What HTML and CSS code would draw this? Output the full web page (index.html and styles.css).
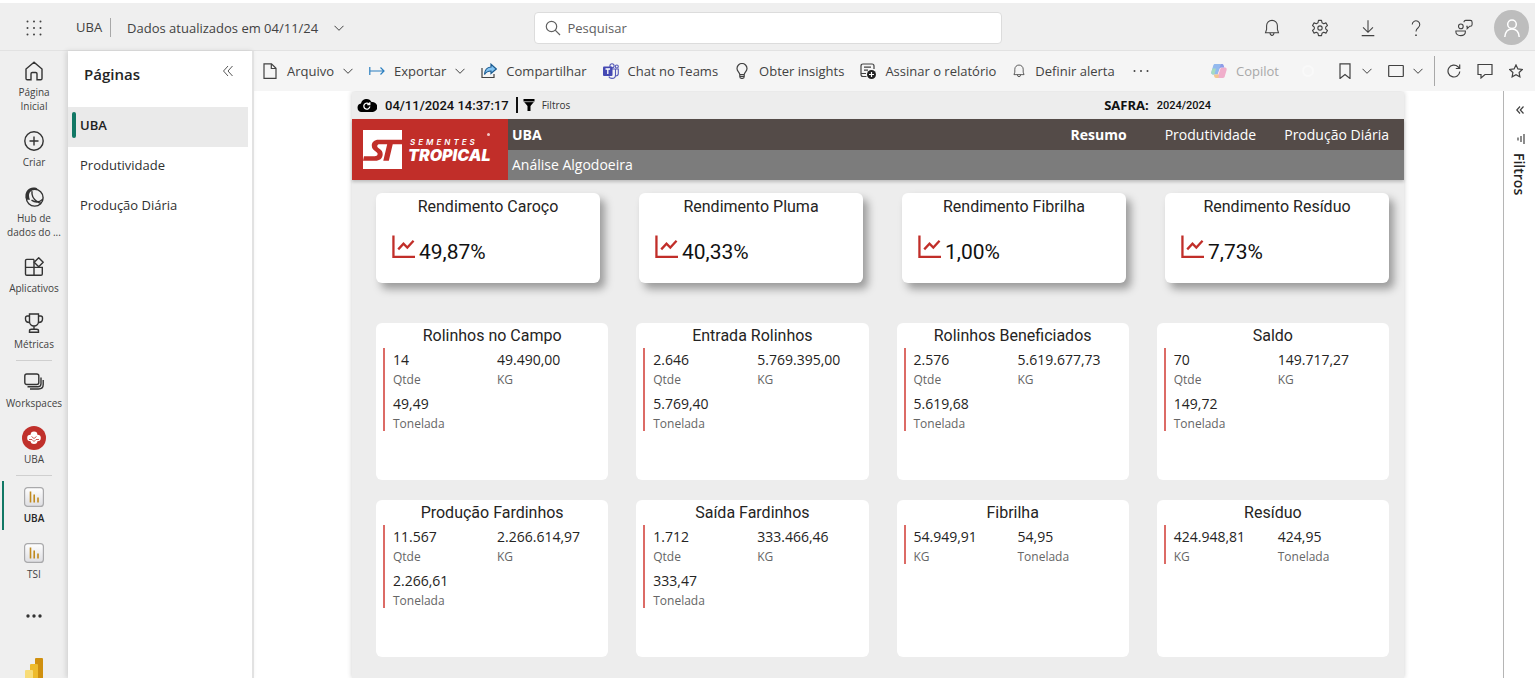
FILE: index.html
```html
<!DOCTYPE html>
<html lang="pt-BR">
<head>
<meta charset="utf-8">
<meta name="viewport" content="width=device-width, initial-scale=1">
<title>UBA - Power BI</title>
<link rel="stylesheet" href="styles.css">
</head>
<body>
<svg class="defs" aria-hidden="true">
  <symbol id="chev" viewBox="0 0 10 10"><path d="M.5 2.8 5 7.3l4.500-4.500"/></symbol>
  <symbol id="bell" viewBox="0 0 20 20"><path d="M10 1.500a6 6 0 0 0-6 6v4.200L2.800 15.200h14.400L16 11.700V7.500a6 6 0 0 0-6-6zM7.800 15.400a2.200 2.800 0 0 0 4.400 0"/></symbol>
  <symbol id="trend" viewBox="0 0 24 24"><path d="M1.500 0v22.200H24M6.500 14.500l5.500-6 4 4L22.500 5.500" stroke-width="2.400"/></symbol>
  <symbol id="report" viewBox="0 0 20 20"><rect x=".6" y=".6" width="18.800" height="18.800" rx="3" fill="url(#rg)" stroke="#a9a9ab" stroke-width="1.200"/><path d="M6.500 4.500v11M10.200 7.500v8M14 10.500v5" stroke="#c08a1e" stroke-width="1.600"/></symbol>
  <linearGradient id="rg" x1="0" y1="0" x2="0" y2="1"><stop offset="0" stop-color="#fff"/><stop offset="1" stop-color="#dedee2"/></linearGradient>
</svg>

<header class="top">
  <div class="top-left">
    <button class="waffle" aria-label="Iniciador de aplicativos"><svg class="dots9" viewBox="0 0 16 16"><path d="M1.500 1.500h0M8 1.500h0M14.500 1.500h0M1.500 8h0M8 8h0M14.500 8h0M1.500 14.500h0M8 14.500h0M14.500 14.500h0"/></svg></button>
    <span class="crumb">UBA</span>
    <button class="updated">Dados atualizados em 04/11/24 <svg class="chev"><use href="#chev"/></svg></button>
  </div>
  <label class="search">
    <svg class="i16" viewBox="0 0 16 16"><circle cx="6.500" cy="6.500" r="5.200"/><path d="M10.200 10.200 15 15"/></svg>
    <input type="search" placeholder="Pesquisar" aria-label="Pesquisar">
  </label>
  <div class="top-right">
    <button aria-label="Notificações"><svg class="i18"><use href="#bell"/></svg></button>
    <button aria-label="Configurações"><svg class="i18" viewBox="0 0 20 20"><circle cx="10" cy="10" r="2.400"/><path d="M8.300 1.500h3.400l.5 2.600 1.900 1.100 2.500-.9 1.700 2.900-2 1.800v2l2 1.800-1.700 2.900-2.500-.9-1.900 1.100-.5 2.600H8.300l-.5-2.600-1.900-1.100-2.500.9-1.700-2.900 2-1.800V9l-2-1.800 1.700-2.900 2.500.9 1.900-1.100z" stroke-linejoin="round"/></svg></button>
    <button aria-label="Baixar"><svg class="i18" viewBox="0 0 20 20"><path d="M10 1.500v13M4.500 9.300l5.500 5.500 5.500-5.500M3 18.500h14"/></svg></button>
    <button aria-label="Ajuda"><svg class="i18" viewBox="0 0 20 20"><path d="M5.800 6.200a4.200 4.200 0 1 1 6.600 3.500C10.800 10.900 10 11.700 10 14"/><path d="M10 17.200v1.600" stroke-width="1.800"/></svg></button>
    <button aria-label="Comentários"><svg class="i18" viewBox="0 0 20 20"><circle cx="6.500" cy="8.200" r="2.600"/><path d="M1 13.300h10.500v1.200c0 2.400-2.300 4-5.200 4S1 16.900 1 14.500zM10 3.500c0-1.400.6-2 2-2h5c1.400 0 2 .6 2 2V6c0 1.400-.6 2-2 2h-.6l-2.900 2.800V8h-1"/></svg></button>
    <button class="avatar" aria-label="Conta"><svg class="i20" viewBox="0 0 20 20"><circle cx="10" cy="6.300" r="4.300"/><path d="M2.800 19c.4-5 3-8 7.200-8s6.800 3 7.200 8"/></svg></button>
  </div>
</header>

<div class="shell">
  <nav class="rail">
    <a href="#"><svg class="i20" viewBox="0 0 20 20"><path d="M10 1.200 2 8v9.500c0 .8.500 1.300 1.300 1.300H7v-6c0-.8.500-1.300 1.300-1.300h3.400c.8 0 1.300.5 1.300 1.300v6h3.700c.8 0 1.300-.5 1.300-1.300V8z"/></svg><span>Página<br>Inicial</span></a>
    <a href="#"><svg class="i20" viewBox="0 0 20 20"><circle cx="10" cy="10" r="9.200"/><path d="M10 5.500v9M5.500 10h9"/></svg><span>Criar</span></a>
    <a href="#"><svg class="i20" viewBox="0 0 20 20"><circle cx="10.700" cy="10.700" r="8.400"/><path d="M1.700 11C.2 5 5-.8 11 .6c1.200.2 2.200.8 3 1.800-4.500-.8-8.500 1.400-9 5.600-.1 1.700.3 3.200 1 4.700C4 13 2.200 12.700 1.700 11z" fill="#333" stroke="none"/><path d="M7.500 13.200c3.500 2.400 8 2.100 11.300-.9M8 4.200c-.5 4 1.500 8 5 10.300M13 14.500l4 2"/></svg><span>Hub de<br>dados do ...</span></a>
    <a href="#"><svg class="i20" viewBox="0 0 20 20"><path d="M10 2.400H2.800c-.8 0-1.300.5-1.300 1.300V17c0 .8.500 1.300 1.300 1.300H17c.8 0 1.300-.5 1.300-1.300v-6.600H1.500M10 2.400v15.900"/><path d="m14.700.8 4.500 4.500-4.500 4.500-4.500-4.500z" fill="#efefef" stroke-linejoin="round"/></svg><span>Aplicativos</span></a>
    <a href="#"><svg class="i20" viewBox="0 0 20 20"><path d="M5.500 1h9v7.500a4.500 4.500 0 0 1-9 0zM5.500 3H3.300C2.300 3 1.500 3.500 1.500 5v1c0 2 1.500 3.500 4 3.500M14.500 3h2.200c1 0 1.800.5 1.800 2v1c0 2-1.500 3.500-4 3.500M10 13v3.200M7.500 16.200h5c1 0 2 .8 2 1.600v1.400h-9v-1.400c0-.8 1-1.600 2-1.600z"/></svg><span>Métricas</span></a>
    <hr>
    <a href="#"><svg class="i20" viewBox="0 0 20 20"><rect x=".8" y="2" width="14" height="10.500" rx="2"/><path d="M3.500 14.800H14c2 0 3-1 3-3V5.500M6 17h8.500c3 0 4.700-1.700 4.700-4.500V8"/></svg><span>Workspaces</span></a>
    <a href="#"><svg class="badge" viewBox="0 0 24 24"><circle cx="12" cy="12" r="12" fill="#c0302b" stroke="none"/><g fill="#fff" stroke="none"><circle cx="12" cy="9" r="3.400"/><circle cx="8.500" cy="12" r="3.300"/><circle cx="15.500" cy="12" r="3.300"/><circle cx="12" cy="14.500" r="3.500"/></g><path class="cotton" d="M7 13.500h3l2 2 2-2h3M9.500 10.500l2.500 2 2.500-2"/></svg><span>UBA</span></a>
    <hr>
    <a href="#" class="current" aria-current="page"><svg class="i20"><use href="#report"/></svg><span>UBA</span></a>
    <a href="#"><svg class="i20"><use href="#report"/></svg><span>TSI</span></a>
    <button class="more" aria-label="Mais"><svg class="i20" viewBox="0 0 20 20"><path class="thick" d="M4 10h0M10 10h0M16 10h0"/></svg></button>
    <a href="#" class="pbi" aria-label="Power BI"><svg class="i24" viewBox="0 0 24 24"><rect x="13" y="0" width="8" height="24" rx="1" fill="#d0900f" stroke="none"/><rect x="8" y="6" width="8" height="18" rx="1" fill="#eebb2c" stroke="none"/><rect x="3" y="12" width="8" height="12" rx="1" fill="#f8dc78" stroke="none"/></svg></a>
  </nav>

  <aside class="pages">
    <div class="pages-head"><h2>Páginas</h2><button aria-label="Recolher"><svg class="i12" viewBox="0 0 12 12"><path d="M6 1 1.500 6 6 11M10.500 1 6 6l4.500 5"/></svg></button></div>
    <a href="#" class="page sel">UBA</a>
    <a href="#" class="page">Produtividade</a>
    <a href="#" class="page">Produção Diária</a>
  </aside>

  <main class="work">
    <div class="tools">
      <button><svg class="i16" viewBox="0 0 16 16"><path d="M2 .8h7.500l4.500 4.500v10H2zM9.300 1v4.500h4.500"/></svg>Arquivo<svg class="chev"><use href="#chev"/></svg></button>
      <button><svg class="i16 blue" viewBox="0 0 16 16"><path d="M.8 4v8M1 8h14M11.500 4.500 15 8l-3.500 3.500"/></svg>Exportar<svg class="chev"><use href="#chev"/></svg></button>
      <button><svg class="i16" viewBox="0 0 16 16"><path d="M1 5v9.500h12V11"/><path d="M10 1.200 15.300 6 10 10.500V8C7 8 5 9 3.500 11.500 3.800 7 6 4.200 10 4z" fill="#83c4f2" stroke="#1c5c92"/></svg>Compartilhar</button>
      <button><svg class="i16" viewBox="0 0 16 16"><g stroke="#5459b8" stroke-width="1.100"><circle cx="9" cy="2.800" r="2.100"/><circle cx="13.800" cy="3.500" r="1.500"/><path d="M9 6h3.500v6c0 2-1.500 3.400-3.500 3.400-1.500 0-2.500-.6-3.200-1.800M12.500 6h2.800v4.500c0 1.500-1 2.500-2.800 2.500"/></g><rect y="3.500" width="9.500" height="9.500" rx="1" fill="#4549b3" stroke="none"/><path d="M2.500 6h4.600M4.800 6v5" stroke="#fff" stroke-width="1.300"/></svg>Chat no Teams</button>
      <button><svg class="i16" viewBox="0 0 16 16"><path d="M5.800 11.500C5.600 9.500 3 8.500 3 5.500a5 5 0 0 1 10 0c0 3-2.600 4-2.800 6zM5.800 11.500v2c0 1 .7 1.800 1.500 1.800h1.400c.8 0 1.500-.8 1.500-1.800v-2M5.800 13.300h4.400"/></svg>Obter insights</button>
      <button><svg class="i16" viewBox="0 0 16 16"><path d="M6.500 13.500H3c-1.300 0-2-.7-2-2V3c0-1.300.7-2 2-2h9c1.300 0 2 .7 2 2v3M4 4.200h7M4 7.200h4M1.500 10.500h4.500"/><circle cx="11.500" cy="11.500" r="4.500" fill="#222" stroke="none"/><path d="M11.500 9v5M9 11.500h5" stroke="#fff"/></svg>Assinar o relatório</button>
      <button><svg class="i14"><use href="#bell"/></svg>Definir alerta</button>
      <button aria-label="Mais opções"><svg class="i20" viewBox="0 0 20 20"><path class="dots" d="M3.500 10h0M10 10h0M16.500 10h0"/></svg></button>
      <button class="copilot" disabled><svg class="i16" viewBox="0 0 16 16"><g stroke="none"><path d="M4 1h5c1 0 1.500.7 1.200 1.700L8 10c-.3.900-1 1.500-2 1.500H2C.7 11.500 0 10.400.4 9L2.200 2.700C2.500 1.600 3 1 4 1z" fill="#93b9ee"/><path d="M10.500 4.500H14c1.300 0 2 1.100 1.600 2.500l-1.800 6.300c-.3 1.100-.8 1.700-1.800 1.700H7c-1 0-1.500-.7-1.200-1.700L8.500 6c.3-.9 1-1.500 2-1.500z" fill="#f0aecb"/><path d="M.4 9 1.400 5.500H5l-1.500 6H2C.7 11.500 0 10.400.4 9z" fill="#a5dbc0"/><path d="M10 1h1c1 0 1.500.6 1.800 1.700l.5 1.800h-3C9 4.500 8.500 5 8 6z" fill="#8e9ce8"/><path d="M7.500 15H5c-1 0-1.500-.6-1.800-1.700l-.5-1.800h3C7 11.500 7.500 11 8 10z" fill="#f6c590"/><path d="m9 5-2.200 6.500h.6L9.600 5z" fill="#fff"/></g></svg>Copilot</button>
      <span class="busy"></span>
      <button aria-label="Indicadores"><svg class="i16" viewBox="0 0 16 16"><path d="M3 .8h10v14.700l-5-4-5 4z"/></svg><svg class="chev"><use href="#chev"/></svg></button>
      <button aria-label="Exibir"><svg class="i16" viewBox="0 0 16 16"><rect x=".7" y="2.500" width="14.600" height="11" rx=".5"/></svg><svg class="chev"><use href="#chev"/></svg></button>
      <span class="rule"></span>
      <button aria-label="Atualizar"><svg class="i14" viewBox="0 0 14 14"><path d="M12.800 7.500A5.900 5.900 0 1 1 11 2.800L12.500 4.300M12.700.6v3.900H8.800"/></svg></button>
      <button aria-label="Comentar"><svg class="i16" viewBox="0 0 16 16"><path d="M1 1.500h14v10H8l-4 3.500v-3.500H1z"/></svg></button>
      <button aria-label="Favorito"><svg class="i14" viewBox="0 0 14 14"><path d="m7 .9 1.900 4 4.400.6-3.200 3 .8 4.300L7 10.700l-3.900 2.100.8-4.300-3.200-3 4.400-.6z"/></svg></button>
    </div>

    <div class="stage">
      <div class="canvas">
        <section class="report">
          <div class="status">
            <svg class="cloud" viewBox="0 0 20 14"><path d="M4.500 14A4.300 4.300 0 0 1 4 5.500 5.600 5.600 0 0 1 14.500 4 4.800 4.800 0 0 1 16 14z"/><path d="M12.800 8.500a3 3 0 1 1-.7-2.300M12.800 4.200v2.500h-2.500" fill="none" stroke="#fff" stroke-width="1.300"/></svg>
            <time>04/11/2024 14:37:17</time>
            <button class="filter"><svg class="i12" viewBox="0 0 12 12"><path d="M.5 0h11v2.200L7.500 7v5h-3V7l-4-4.800z" fill="#000" stroke="none"/><path d="M1 2.700h10" stroke="#eee" stroke-width=".7"/></svg>Filtros</button>
            <span class="safra"><b>SAFRA:</b><span>2024/2024</span></span>
          </div>
          <div class="banner">
            <div class="logo">
              <svg class="mark" viewBox="0 0 40 40" role="img" aria-label="ST"><rect width="40" height="40" fill="#fff"/><path d="M40 10H16c-4.500 0-7 2.500-7 6 0 3 1.500 4.500 4 6 2 1.300 2.300 2.300 1.800 3.500-.4 1-1.200 1.500-2.800 1.500H1l-1 4.500h12.500c4.800 0 7.300-2.500 7.700-6.200.2-3-1.200-4.800-3.700-6.300-1.600-1-2.200-1.700-1.800-3 .3-1 1-1.500 2.500-1.500h7.600l-4 17h5.700l4-17H40z" fill="#c12e29"/></svg>
              <div class="brand"><span class="b1">SEMENTES</span><span class="b2">TROPICAL</span></div><i class="reg"></i>
            </div>
            <div class="heads">
              <div class="line1"><h1>UBA</h1><nav><a href="#" class="on">Resumo</a><a href="#">Produtividade</a><a href="#">Produção Diária</a></nav></div>
              <div class="line2">Análise Algodoeira</div>
            </div>
          </div>
          <div class="kpis">
            <article><h3>Rendimento Caroço</h3><p><svg class="trend"><use href="#trend"/></svg>49,87%</p></article>
            <article><h3>Rendimento Pluma</h3><p><svg class="trend"><use href="#trend"/></svg>40,33%</p></article>
            <article><h3>Rendimento Fibrilha</h3><p><svg class="trend"><use href="#trend"/></svg>1,00%</p></article>
            <article><h3>Rendimento Resíduo</h3><p><svg class="trend"><use href="#trend"/></svg>7,73%</p></article>
          </div>
          <div class="cards">
            <article><h3>Rolinhos no Campo</h3><dl><div><dd>14</dd><dt>Qtde</dt></div><div><dd>49.490,00</dd><dt>KG</dt></div><div><dd>49,49</dd><dt>Tonelada</dt></div></dl></article>
            <article><h3>Entrada Rolinhos</h3><dl><div><dd>2.646</dd><dt>Qtde</dt></div><div><dd>5.769.395,00</dd><dt>KG</dt></div><div><dd>5.769,40</dd><dt>Tonelada</dt></div></dl></article>
            <article><h3>Rolinhos Beneficiados</h3><dl><div><dd>2.576</dd><dt>Qtde</dt></div><div><dd>5.619.677,73</dd><dt>KG</dt></div><div><dd>5.619,68</dd><dt>Tonelada</dt></div></dl></article>
            <article><h3>Saldo</h3><dl><div><dd>70</dd><dt>Qtde</dt></div><div><dd>149.717,27</dd><dt>KG</dt></div><div><dd>149,72</dd><dt>Tonelada</dt></div></dl></article>
            <article><h3>Produção Fardinhos</h3><dl><div><dd>11.567</dd><dt>Qtde</dt></div><div><dd>2.266.614,97</dd><dt>KG</dt></div><div><dd>2.266,61</dd><dt>Tonelada</dt></div></dl></article>
            <article><h3>Saída Fardinhos</h3><dl><div><dd>1.712</dd><dt>Qtde</dt></div><div><dd>333.466,46</dd><dt>KG</dt></div><div><dd>333,47</dd><dt>Tonelada</dt></div></dl></article>
            <article><h3>Fibrilha</h3><dl><div><dd>54.949,91</dd><dt>KG</dt></div><div><dd>54,95</dd><dt>Tonelada</dt></div></dl></article>
            <article><h3>Resíduo</h3><dl><div><dd>424.948,81</dd><dt>KG</dt></div><div><dd>424,95</dd><dt>Tonelada</dt></div></dl></article>
          </div>
        </section>
      </div>
      <aside class="filters">
        <button aria-label="Expandir filtros"><svg class="i8" viewBox="0 0 8 8"><path d="M4 .5.8 4 4 7.500M7.500.5 4.300 4l3.200 3.500"/></svg></button>
        <svg class="i10" viewBox="0 0 10 10"><path d="M9 0v10M6 2v6M3 3.500v3"/></svg>
        <span>Filtros</span>
      </aside>
    </div>
  </main>
</div>
</body>
</html>
```
FILE: styles.css
```css
* { box-sizing: border-box; }
body {
  margin: 0;
  height: 100vh;
  display: flex;
  flex-direction: column;
  overflow: hidden;
  border-top: 3px solid #fff;
  background: #efefef;
  color: #424242;
  font-family: "Open Sans", "Noto Sans", sans-serif;
  font-size: 13px;
}
h1, h2, h3, p, dl, dd { margin: 0; }
a { color: inherit; text-decoration: none; }
button { font: inherit; color: inherit; background: none; border: 0; padding: 0; }
svg { flex: none; fill: none; stroke: #424242; stroke-width: 1.2; }
.defs { position: absolute; width: 0; height: 0; }
.i8 { width: 8px; height: 8px; }
.i10 { width: 10px; height: 10px; }
.i12 { width: 12px; height: 12px; }
.i14 { width: 14px; height: 14px; }
.i16 { width: 16px; height: 16px; }
.i18 { width: 18px; height: 18px; }
.i20 { width: 20px; height: 20px; }
.i24 { width: 24px; height: 24px; }
.chev { width: 10px; height: 10px; stroke-width: 1; }

/* top bar */
.top {
  flex: none;
  height: 48px;
  display: grid;
  grid-template-columns: 1fr minmax(0, 468px) 1fr;
  align-items: center;
  padding-top: 2px;
  border-bottom: 1px solid #e2e2e2;
}
.top-left, .top-right { display: flex; align-items: center; }
.waffle { width: 68px; display: flex; justify-content: center; }
.dots9 { width: 16px; height: 16px; stroke-width: 2; stroke-linecap: round; }
.crumb { margin-left: 8px; padding-right: 8px; line-height: 19px; border-right: 1px solid #a8a8a8; }
.updated { display: flex; align-items: center; gap: 16px; margin-left: 16px; white-space: nowrap; }
.search {
  height: 32px;
  display: flex;
  align-items: center;
  gap: 6px;
  padding: 0 10px;
  background: #fff;
  border: 1px solid #dcdcdc;
  border-radius: 4px;
}
.search svg { stroke: #616161; }
.search input { flex: 1; min-width: 0; padding: 0 0 0 1px; border: 0; outline: 0; background: none; font: inherit; }
.search input::placeholder { color: #616161; opacity: 1; }
.top-right { justify-content: flex-end; padding-right: 6px; }
.top-right button { width: 48px; display: flex; justify-content: center; }
.top-right .avatar { width: 35px; height: 35px; margin-left: 6px; align-items: center; border-radius: 50%; background: #bdbdbd; }
.avatar svg { stroke: #fff; stroke-width: 1.5; }

/* shell */
.shell { flex: 1; min-height: 0; display: flex; }
.rail { flex: none; width: 68px; padding-top: 1px; overflow: hidden; display: flex; flex-direction: column; align-items: center; font-size: 10px; line-height: 14px; }
.rail a { flex: none; width: 100%; display: flex; flex-direction: column; align-items: center; gap: 4px; padding: 9px 0; text-align: center; white-space: nowrap; }
.rail svg { stroke: #333; stroke-width: 1.4; }
.rail hr { flex: none; width: 36px; margin: 0 0 2px; border: 0; border-top: 1px solid #cfcfcf; }
.rail .badge { width: 24px; height: 24px; margin: -2px 0; }
.rail .cotton { stroke: #c0302b; stroke-width: .8; }
.rail .current { background: linear-gradient(#117865, #117865) 2px 3px / 2px 49px no-repeat; color: #242424; font-weight: 600; }
.more { flex: none; margin: 16px 0 32px; display: flex; }
.rail .thick { stroke-width: 3.4; stroke-linecap: round; }
.rail .pbi { padding: 0; }

.pages { flex: none; width: 186px; z-index: 1; background: #fff; border-right: 2px solid #e2e2e2; box-shadow: -2px 0 5px rgba(0, 0, 0, .12); color: #303030; }
.pages-head { display: flex; align-items: center; justify-content: space-between; height: 46px; margin-bottom: 10px; padding: 0 18px 0 16px; }
.pages-head h2 { font-size: 15px; font-weight: 600; color: #242424; }
.pages-head button { display: flex; padding-bottom: 6px; }
.pages-head svg { stroke-width: .9; }
.page { display: flex; align-items: center; height: 40px; margin-right: 4px; padding: 0 0 4px 12px; }
.sel { padding-left: 4px; background: #eaeaea; color: #222; font-weight: 600; }
.sel::before { content: ""; width: 4px; height: 26px; margin-right: 4px; border-radius: 2px; background: #117865; }

.work { flex: 1; min-width: 0; display: flex; flex-direction: column; }
.tools { flex: none; height: 40px; display: flex; align-items: center; padding-right: 4px; background: #f5f5f5; white-space: nowrap; }
.tools button { display: flex; align-items: center; gap: 9px; padding: 0 8px; }
.tools .blue { stroke: #2b7fc0; }
.dots { stroke-width: 2; stroke-linecap: round; }
.tools .copilot { margin-left: auto; color: #a8a8a8; }
.busy { width: 12px; height: 12px; margin: 0 15px; border: 2px solid #f9f9f9; border-radius: 50%; }
.rule { width: 1px; height: 30px; margin: 0 4px 0 3px; background: #a8a8a8; }

.stage { flex: 1; min-height: 0; display: flex; background: #fff; }
.canvas { flex: 1; min-width: 0; padding: 1px 99px 0 98px; overflow: hidden; }
.report { height: 100%; background: #ededed; box-shadow: 0 0 5px rgba(0, 0, 0, .2); }
.filters { flex: none; width: 32px; display: flex; flex-direction: column; align-items: center; gap: 20px; padding-top: 15px; border-left: 1px solid #b5b5b5; }
.filters button { display: flex; }
.filters span { writing-mode: vertical-rl; margin-top: -11px; font-size: 14px; font-weight: 600; color: #242424; }

/* report */
.status { height: 26px; display: flex; align-items: center; padding: 0 193px 0 5px; color: #111; }
.cloud { width: 20px; height: 14px; fill: #000; stroke: none; }
.status time { margin: 0 7px 0 8px; font: 500 13px Roboto, sans-serif; }
.filter { display: flex; align-items: center; gap: 7px; padding: 1px 0 1px 5px; border-left: 2px solid #111; font-size: 10px; color: #333; }
.safra { display: flex; align-items: center; gap: 8px; margin-left: auto; font-size: 13px; }
.safra span { font: 500 11px Roboto, sans-serif; }
.banner { display: flex; height: 61px; margin-top: 1px; color: #fff; box-shadow: 0 2px 3px rgba(0, 0, 0, .2); }
.logo { flex: none; width: 156px; display: flex; align-items: center; gap: 6px; padding-left: 11px; background: #c12e29; }
.mark { width: 39px; height: 39px; stroke: none; }
.brand { display: flex; flex-direction: column; font-style: italic; font-family: Inter, sans-serif; }
.b1 { padding-left: 2px; font-size: 8px; line-height: 10px; font-weight: 600; letter-spacing: 3px; }
.b2 { font-size: 16px; line-height: 16px; font-weight: 900; }
.reg { align-self: flex-start; width: 3px; height: 3px; margin: 14px 0 0 -9px; border-radius: 50%; background: #f0c8c6; }
.heads { flex: 1; min-width: 0; }
.line1 { height: 31px; display: flex; align-items: center; justify-content: space-between; padding: 0 15px 0 4px; background: #544b48; }
.line1 h1 { font-size: 14px; font-weight: 700; }
.line1 nav { display: flex; gap: 28px; font-size: 14px; }
.line1 .on { margin-right: 10px; font-weight: 700; }
.line2 { height: 30px; padding-left: 4px; background: #7c7c7c; font-size: 14px; line-height: 30px; }

.kpis, .cards { display: grid; grid-template-columns: repeat(4, 1fr); margin: 0 15px 0 24px; }
.kpis { gap: 39px; margin-top: 13px; margin-bottom: 40px; }
.cards { column-gap: 28px; row-gap: 20px; }
.report article { background: #fff; border-radius: 6px; }
.report h3 { padding-top: 1px; font: 400 16px/24px Roboto, sans-serif; text-align: center; color: #252423; white-space: nowrap; }
.kpis article { min-height: 90px; padding-top: 1px; box-shadow: 5px 6px 8px rgba(0, 0, 0, .35); }
.kpis p { display: flex; align-items: center; gap: 4px; margin-top: 15px; padding-left: 16px; font: 400 21px/36px Roboto, sans-serif; color: #111; }
.trend { width: 23px; height: 24px; margin-bottom: 11px; stroke: #c12e29; }
.cards article { min-height: 157px; }
.cards dl { display: grid; grid-template-columns: 104px 1fr; row-gap: 5px; margin: 0 0 0 7px; padding-left: 8px; border-left: 2px solid #dc6b66; }
.cards dl div { display: flex; flex-direction: column; }
.cards dd { font-size: 14px; line-height: 24px; color: #252423; }
.cards dt { font-size: 12px; line-height: 15px; color: #666; }
```
